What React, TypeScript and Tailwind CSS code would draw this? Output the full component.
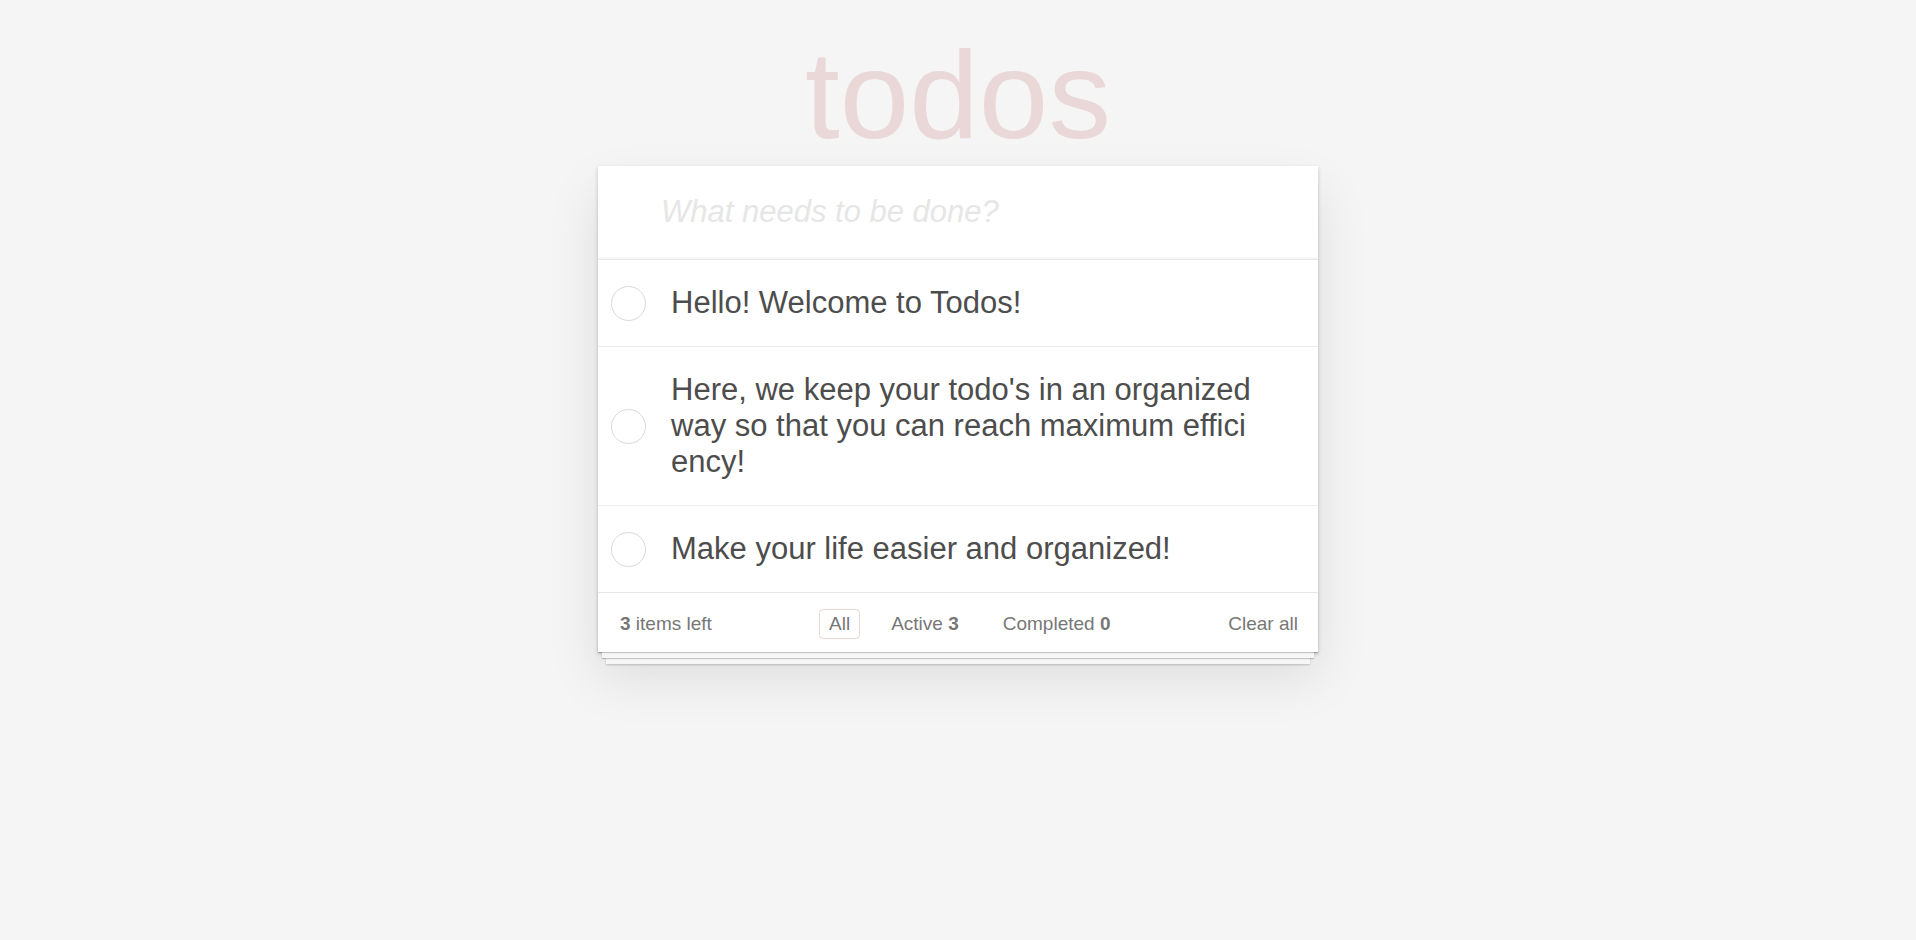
import { useState } from "react";

interface ITodo {
    id: number,
    text: string,
    done: boolean
}

const initialTodos: ITodo[] = [
    { id: 1, text: "Hello! Welcome to Todos!", done: false },
    { id: 2, text: "Here, we keep your todo's in an organized way so that you can reach maximum efficiency!", done: false },
    { id: 3, text: "Make your life easier and organized!", done: false },
];

function TodoItem({ todo, last }: { todo: ITodo, last: boolean }) {
    return (
        <li className={`flex items-center bg-white ${last ? "" : "border-b border-[#ededed]"}`}>
            <span className="ml-[13px] w-[35px] h-[35px] shrink-0 rounded-full border border-[#d9d9d9]" />
            <label className="ml-[25px] w-[589px] py-[25px] text-[31px] leading-[36px] text-[#4d4d4d] break-all">
                {todo.text}
            </label>
        </li>
    );
}

function App() {
    const [todos] = useState<ITodo[]>(initialTodos);
    const active = todos.filter(t => !t.done).length;
    const completed = todos.length - active;

    return (
        <div className="min-h-[940px] bg-[#f5f5f5] font-['Liberation_Sans',Arial,sans-serif]">
            <h1 className="pt-[32px] mb-[9px] text-center text-[125px] leading-none text-[#ead7d7]">todos</h1>
            <section className="mx-auto w-[720px] bg-white shadow-[0_2px_4px_0_rgba(0,0,0,0.2),0_25px_50px_0_rgba(0,0,0,0.1)]">
                <div className="h-[93px] flex items-center pl-[63px] shadow-[inset_0_-2px_1px_rgba(0,0,0,0.03)]">
                    <span className="text-[31px] italic text-[#e6e6e6]">What needs to be done?</span>
                </div>
                <ul className="border-t border-[#e6e6e6]">
                    {todos.map((t, i) => (
                        <TodoItem key={t.id} todo={t} last={i === todos.length - 1} />
                    ))}
                </ul>
                <footer className="h-[60px] flex items-center pt-[3px] pl-[22px] pr-[20px] border-t border-[#e6e6e6] text-[19px] text-[#777] shadow-[0_1px_1px_rgba(0,0,0,0.2),0_10px_0_-4px_#f6f6f6,0_11px_1px_-4px_rgba(0,0,0,0.2),0_20px_0_-8px_#f6f6f6,0_21px_2px_-8px_rgba(0,0,0,0.2)]">
                    <span className="w-[199px]"><b>{active}</b> items left</span>
                    <div className="flex items-center">
                        <span className="h-[30px] flex items-center px-[9px] rounded-[4px] border border-[rgba(175,47,47,0.2)]">All</span>
                        <span className="ml-[21px] h-[30px] flex items-center px-[9px] border border-transparent">Active&nbsp;<b>{active}</b></span>
                        <span className="ml-[24px] h-[30px] flex items-center px-[9px] border border-transparent">Completed&nbsp;<b>{completed}</b></span>
                    </div>
                    <span className="ml-auto">Clear all</span>
                </footer>
            </section>
        </div>
    );
}

export default App;
